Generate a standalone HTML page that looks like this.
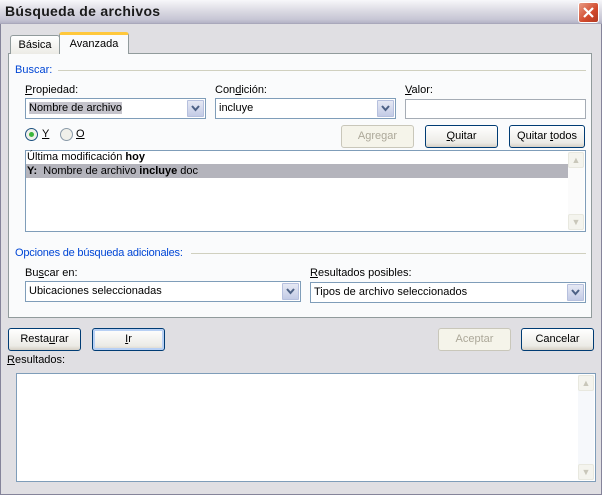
<!DOCTYPE html>
<html><head><meta charset="utf-8"><style>
*{margin:0;padding:0;box-sizing:border-box}
body{width:602px;height:495px;overflow:hidden;background:#e0dfe3;font-family:"Liberation Sans",Tahoma,sans-serif;font-size:11px;color:#000;position:relative}
.a{position:absolute}
.win{left:0;top:0;width:602px;height:495px;border:1px solid #85849a;border-top:none;background:#e0dfe3}
.title{left:0;top:0;width:602px;height:24px;background:linear-gradient(#f7f7fa,#dcdbe4 45%,#c6c5d4 85%,#b4b3c6);border-bottom:1px solid #a9a8bb}
.title span{position:absolute;left:5px;top:3px;font-weight:bold;font-size:14px;color:#1a1a1a;letter-spacing:.3px}
.close{left:578px;top:2px;width:21px;height:21px;border-radius:3px;background:linear-gradient(135deg,#e89a84,#d1492c 60%,#b23a22);border:1px solid #fff}
.panel{left:8px;top:53px;width:584px;height:265px;background:#fafbfc;border:1px solid #919b9c}
.tab{height:20px;border:1px solid #919b9c;border-bottom:none;border-radius:3px 3px 0 0;text-align:center;line-height:20px}
.grp{color:#0046d5}
.line{height:1px;background:#d0d0bf}
.u{text-decoration:underline}
.input{background:#fff;border:1px solid #7f9db9;height:21px;line-height:19px;padding-left:3px;white-space:nowrap;overflow:hidden}
.dd{position:absolute;right:1px;top:1px;width:17px;height:17px;background:linear-gradient(#e6e9f4,#c3cbe6);border:1px solid #b6c0de;border-radius:1px}
.dd svg{position:absolute;left:3px;top:4px}
.btn{height:23px;border:1px solid #003c74;border-radius:3px;background:linear-gradient(#fff,#ecebe6 80%,#d6d0c5);text-align:center;line-height:21px}
.dis{border-color:#c9c7ba;color:#aca899;background:#f5f4ea}
.sb{position:absolute;right:1px;top:1px;bottom:1px;width:16px;background:#fbfbfb}
.sbb{position:absolute;left:0;width:16px;height:16px;border:1px solid #e8e8df;background:#f4f4ee;border-radius:2px;color:#c9c7ba;font-size:9px;text-align:center;line-height:14px}
.radio{width:13px;height:13px;border:1px solid #1c5180;border-radius:50%;background:#f0f0ea}
</style></head><body>
<div class="a win"></div>
<div class="a title"><span>Búsqueda de archivos</span></div>
<div class="a close"><svg width="19" height="19" viewBox="0 0 19 19"><path d="M5 5L14 14M14 5L5 14" stroke="#fff" stroke-width="2.2"/></svg></div>

<div class="a panel"></div>
<div class="a tab" style="left:10px;top:35px;width:50px;background:linear-gradient(#fff,#ecebe6);height:19px;line-height:18px">Básica</div>
<div class="a tab" style="left:59px;top:32px;width:70px;height:22px;background:#fafbfc;border-top:3px solid #ffc83c;line-height:18px">Avanzada</div>

<div class="a grp" style="left:15px;top:64px">Buscar:</div>
<div class="a line" style="left:58px;top:70px;width:528px"></div>
<div class="a" style="left:25px;top:84px"><span class="u">P</span>ropiedad:</div>
<div class="a input" style="left:25px;top:98px;width:181px"><span style="background:#c5c4cc">Nombre de archivo</span><div class="dd"><svg width="9" height="7"><path d="M1 1L4.5 5L8 1" stroke="#4d6185" stroke-width="2" fill="none"/></svg></div></div>
<div class="a" style="left:215px;top:84px">Con<span class="u">d</span>ición:</div>
<div class="a input" style="left:215px;top:98px;width:181px">incluye<div class="dd"><svg width="9" height="7"><path d="M1 1L4.5 5L8 1" stroke="#4d6185" stroke-width="2" fill="none"/></svg></div></div>
<div class="a" style="left:405px;top:84px"><span class="u">V</span>alor:</div>
<div class="a input" style="left:405px;top:99px;width:181px;height:20px;border-color:#a5acb5"></div>

<div class="a radio" style="left:25px;top:128px"><div class="a" style="left:3px;top:3px;width:5px;height:5px;border-radius:50%;background:#3bb53b"></div></div>
<div class="a" style="left:42px;top:128px"><span class="u">Y</span></div>
<div class="a radio" style="left:60px;top:128px;border-color:#8a9aa8"></div>
<div class="a" style="left:76px;top:128px"><span class="u">O</span></div>
<div class="a btn dis" style="left:341px;top:125px;width:73px">Agregar</div>
<div class="a btn" style="left:425px;top:125px;width:73px"><span class="u">Q</span>uitar</div>
<div class="a btn" style="left:509px;top:125px;width:76px">Quitar <span class="u">t</span>odos</div>

<div class="a" style="left:25px;top:150px;width:561px;height:82px;background:#fff;border:1px solid #7f9db9">
 <div class="a" style="left:1px;top:0;line-height:13px">Última modificación <b>hoy</b></div>
 <div class="a" style="left:0;top:13px;width:542px;height:14px;background:#b4b4bc;line-height:14px;padding-left:1px"><b>Y:</b>&nbsp; Nombre de archivo <b>incluye</b> doc</div>
 <div class="sb"><div class="sbb" style="top:0">&#9650;</div><div class="sbb" style="bottom:0">&#9660;</div></div>
</div>

<div class="a grp" style="left:15px;top:247px;letter-spacing:-0.2px">Opciones de búsqueda adicionales:</div>
<div class="a line" style="left:191px;top:253px;width:395px"></div>
<div class="a" style="left:25px;top:267px">Bu<span class="u">s</span>car en:</div>
<div class="a input" style="left:25px;top:281px;width:276px">Ubicaciones seleccionadas<div class="dd"><svg width="9" height="7"><path d="M1 1L4.5 5L8 1" stroke="#4d6185" stroke-width="2" fill="none"/></svg></div></div>
<div class="a" style="left:310px;top:267px"><span class="u">R</span>esultados posibles:</div>
<div class="a input" style="left:310px;top:282px;width:276px">Tipos de archivo seleccionados<div class="dd"><svg width="9" height="7"><path d="M1 1L4.5 5L8 1" stroke="#4d6185" stroke-width="2" fill="none"/></svg></div></div>

<div class="a btn" style="left:8px;top:328px;width:73px">Resta<span class="u">u</span>rar</div>
<div class="a btn" style="left:92px;top:328px;width:73px;box-shadow:inset 0 0 0 2px #b8d0f4"><span class="u">I</span>r</div>
<div class="a btn dis" style="left:438px;top:328px;width:73px">Aceptar</div>
<div class="a btn" style="left:521px;top:328px;width:73px">Cancelar</div>
<div class="a" style="left:7px;top:354px"><span class="u">R</span>esultados:</div>

<div class="a" style="left:16px;top:373px;width:580px;height:109px;background:#fff;border:1px solid #7f9db9">
 <div class="sb" style="background:#f6f8fb"><div class="sbb" style="top:0">&#9650;</div><div class="sbb" style="bottom:0">&#9660;</div></div>
</div>
</body></html>
